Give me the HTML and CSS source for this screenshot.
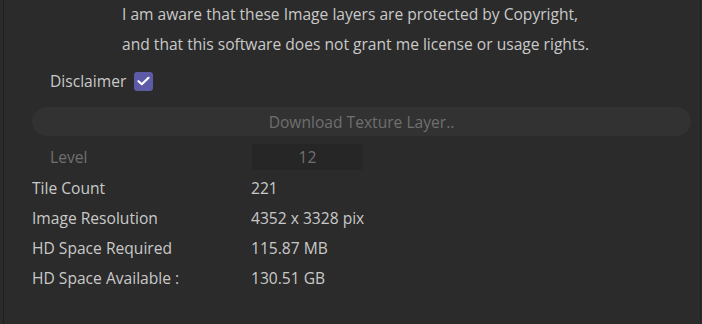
FILE: index.html
```html
<!DOCTYPE html>
<html lang="en">
<head>
    <meta charset="UTF-8">
    <title>Texture Download</title>
    <link rel="stylesheet" href="styles.css">
</head>
<body>
    <div class="panel">
        <div class="notice">
            <p>I am aware that these Image layers are protected by Copyright,</p>
            <p>and that this software does not grant me license or usage rights.</p>
        </div>

        <label class="disclaimer">
            <span>Disclaimer</span>
            <span class="check">
                <svg width="13" height="10" viewBox="0 0 13 10">
                    <path d="M1.5 5.2 L4.8 8.2 L11.5 1.8" fill="none" stroke="#ffffff" stroke-width="2.2" stroke-linecap="round" stroke-linejoin="round"/>
                </svg>
            </span>
        </label>

        <button class="btn-download" disabled>Download Texture Layer..</button>

        <div class="row level">
            <span class="label">Level</span>
            <span class="level-box">12</span>
        </div>

        <div class="row">
            <span class="label">Tile Count</span>
            <span class="value">221</span>
        </div>
        <div class="row">
            <span class="label">Image Resolution</span>
            <span class="value">4352 x 3328 pix</span>
        </div>
        <div class="row">
            <span class="label">HD Space Required</span>
            <span class="value">115.87 MB</span>
        </div>
        <div class="row">
            <span class="label">HD Space Available :</span>
            <span class="value">130.51 GB</span>
        </div>
    </div>
</body>
</html>
```

FILE: styles.css
```css
html, body {
    margin: 0;
    padding: 0;
    background-color: #2b2b2b;
}
body {
    font-family: "Open Sans", "Noto Sans", sans-serif;
    font-size: 15.6px;
    color: #c9c9c9;
}
.panel {
    height: 324px;
    box-sizing: border-box;
    margin-left: 3px;
    margin-right: 1px;
    border-left: 1px solid #1e1e1e;
    border-right: 1px solid #232323;
    padding: 0 10px 0 28px;
    overflow: hidden;
}
.notice {
    padding-left: 90px;
    margin-top: -1px;
}
.notice p {
    margin: 0;
    line-height: 30px;
}
.disclaimer {
    display: flex;
    align-items: center;
    gap: 8px;
    margin-top: 11px;
    padding-left: 18px;
    height: 22px;
}
.check {
    width: 19px;
    height: 19px;
    border-radius: 3px;
    background-color: #5d5aa8;
    display: flex;
    align-items: center;
    justify-content: center;
}
.btn-download {
    display: block;
    width: 659px;
    height: 29px;
    margin-top: 15px;
    border: none;
    border-radius: 15px;
    background-color: #323232;
    color: #6f6f6f;
    font-family: inherit;
    font-size: 15.6px;
    padding: 0;
}
.row {
    display: grid;
    grid-template-columns: 219px auto;
    align-items: center;
    height: 30px;
}
.row.level {
    margin-top: 7px;
    height: 28px;
    margin-bottom: 2px;
    color: #707070;
}
.row.level .label {
    padding-left: 18px;
}
.level-box {
    width: 111px;
    height: 26px;
    margin-left: 1px;
    border-radius: 4px;
    background-color: #262626;
    text-align: center;
    line-height: 26px;
}
```
